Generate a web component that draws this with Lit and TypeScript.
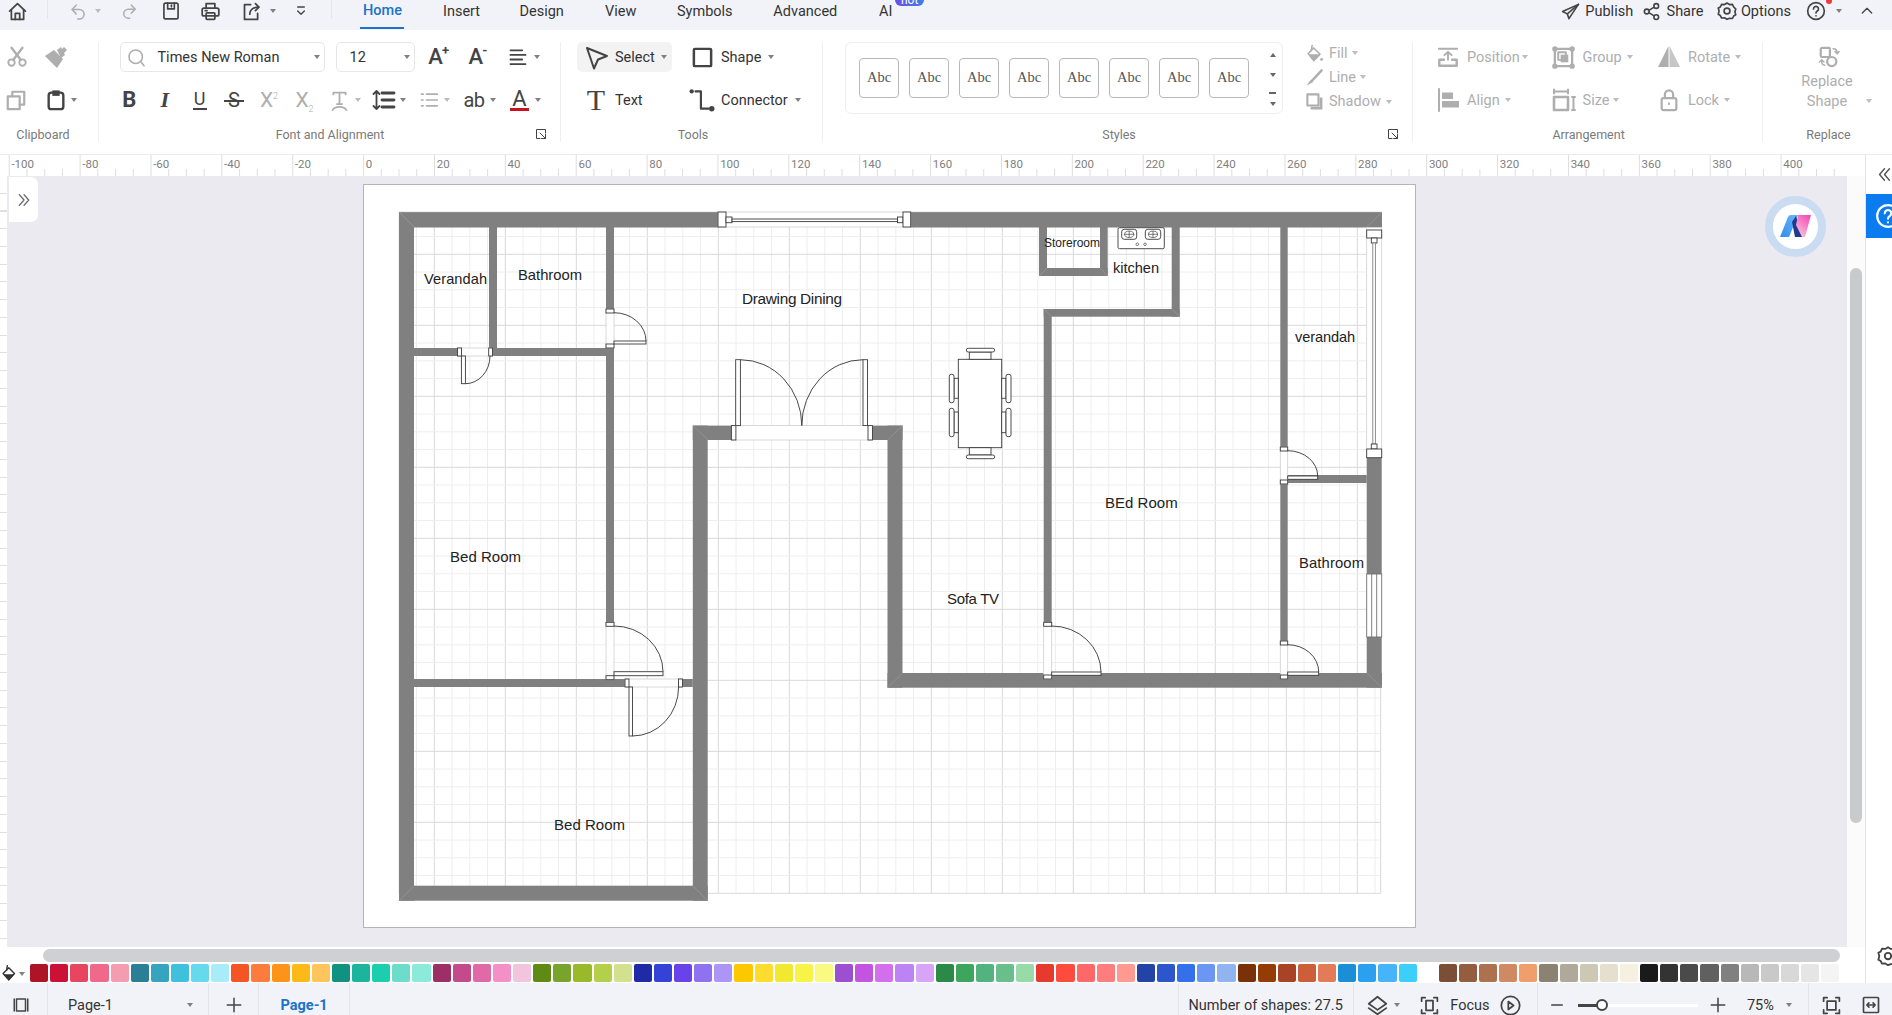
import { LitElement, html, css, svg } from "lit";
import { customElement } from "lit/decorators.js";

type Item = [number, number, unknown, string?];

const place = (items: Item[], origin = 0) => {
  let prev = origin;
  return items.map(([x, w, c, cls]) => {
    const m = x - prev;
    prev = x + w;
    return html`<span class="cell ${cls || ""}" style="margin-left:${m}px;width:${w}px">${c}</span>`;
  });
};
const ic = (s: number, body: unknown, cls = "") =>
  html`<svg class="ic ${cls}" width=${s} height=${s} viewBox="0 0 24 24">${body}</svg>`;
const I = (cx: number, s: number, body: unknown, cls = ""): Item => [cx - s / 2, s, ic(s, body), cls];
const T = (x: number, w: number, t: unknown, cls = ""): Item => [x, w, t, "t " + cls];
const CT = (cx: number, w: number, t: unknown, cls = ""): Item => [cx - w / 2, w, t, cls];
const C = (cx: number, cls = ""): Item => [cx - 4, 8, html`<i class="caret"></i>`, cls];
const SEP = (x: number): Item => [x, 1, "", "sep"];

const P = {
  home: svg`<path d="M3 11.500 12 3l9 8.500"/><path d="M5 10v11h14V10"/><path d="M9.500 21v-7h5v7"/>`,
  undo: svg`<path d="M9 4 4 9.500 9 15"/><path d="M4 9.500h9a6 6 0 0 1 6 6 6 6 0 0 1-6 6h-2"/>`,
  redo: svg`<path d="M15 4l5 5.500-5 5.500"/><path d="M20 9.500h-9a6 6 0 0 0-6 6 6 6 0 0 0 6 6h2"/>`,
  save: svg`<rect x="3.500" y="2.500" width="17" height="19" rx="2"/><path d="M8 2.500v7h8v-7"/><path d="M12.500 5v2"/>`,
  print: svg`<path d="M7 8V3h10v5"/><rect x="2.500" y="8" width="19" height="9" rx="2"/><rect x="7" y="13.500" width="10" height="7.500" rx="1"/><path d="M6 11h2"/>`,
  exp: svg`<path d="M11 4H4v17h15v-7"/><path d="M10 15c0-4.500 3.500-8 10-8"/><path d="M16.500 3 20.500 7l-4 4"/>`,
  cust: svg`<path d="M7 6h10"/><path d="M7 12l5 5 5-5"/>`,
  plane: svg`<path d="M22 3 2 12l6 3 2 6 12-18Z"/><path d="M22 3 8 15"/>`,
  share: svg`<circle cx="6" cy="12" r="3"/><circle cx="18" cy="5" r="3"/><circle cx="18" cy="19" r="3"/><path d="M8.700 10.500 15.300 6.500M8.700 13.500l6.600 4"/>`,
  gear: svg`<path d="M12 2.500l3 1.800 3.500-.3 1.500 3.200 2.500 2.300-1 3.500 1 3.500-2.500 1.500-1.500 3-3.500-.2L12 22l-3-1.800-3.500.2L4 17.500 1.500 16l1-4-1-3.500L4 7.200 5.500 4 9 4.300z"/><circle cx="12" cy="12" r="3.500"/>`,
  help: svg`<circle cx="12" cy="12" r="10"/><path d="M9 9.500a3 3 0 1 1 4.500 2.600c-1 .6-1.500 1.200-1.500 2.400"/><path d="M12 17.800v.2"/>`,
  up: svg`<path d="M5 15l7-7 7 7"/>`,
  cut: svg`<circle cx="6" cy="18" r="3.500"/><circle cx="18" cy="18" r="3.500"/><path d="M8 15 18 2M16 15 6 2" stroke-width="2.600"/>`,
  brush: svg`<path class="f" d="M1 11 10 5l9 9-6 9z"/><path class="f" d="M13 5l4-3 1 2 2-2 3 3-3 3 1 2-4 3z"/>`,
  copy: svg`<rect x="3" y="8" width="13" height="14" stroke-width="2.400"/><path d="M8 8V3h13v14h-5" stroke-width="2.400"/>`,
  paste: svg`<rect x="4" y="4" width="16" height="18" rx="3" stroke-width="2.600"/><path class="f" d="M8 1.500h8v6H8z"/>`,
  search: svg`<circle cx="11" cy="11" r="8.500"/><path d="M17.500 17.500l4 5"/>`,
  align: svg`<path d="M3 4h14M3 9.500h18M3 15h14M3 20.500h18" stroke-width="2.200"/>`,
  spacing: svg`<path d="M10 5h12M10 12h12M10 19h12" stroke-width="2.800"/><path d="M4.500 3v18M1.500 6l3-3 3 3M1.500 18l3 3 3-3" stroke-width="1.800"/>`,
  bullets: svg`<path d="M9 5h13M9 12h13M9 19h13M3 5h2M3 12h2M3 19h2"/>`,
  tstyle: svg`<path d="M5 5V3h14v2M12 3v13M9 16h6" /><path d="M4 23c3-5 13-5 16 0"/>`,
  cursor: svg`<path d="M3 3l20 8-9 3.500-4 9z"/>`,
  shape: svg`<rect x="3" y="3" width="18" height="18" rx="1" stroke-width="2.600"/>`,
  conn: svg`<circle class="f" cx="2.500" cy="4" r="2"/><path d="M6 4h5v16h7"/><circle class="f" cx="21" cy="20" r="2.500"/>`,
  launch: svg`<path d="M21 10V3H3v18h7"/><path d="M10 10l11 11M21 13v8h-8" />`,
  fill: svg`<path d="M4 12 11 5l8 8-8 8z"/><path class="f" d="M4 13h15l-8 8z"/><path d="M8 8 9 2"/><circle class="f" cx="21" cy="19.500" r="1.800"/>`,
  line: svg`<path class="f" d="M2 22 7 15l3 3z"/><path d="M9 16 21 3" stroke-width="3"/>`,
  shadow: svg`<rect x="3" y="3" width="14" height="14" stroke-width="2.600"/><path class="f" d="M18.500 7h3.500v15H7v-3.500h11.500z"/>`,
  pos: svg`<path d="M2 3h20"/><path d="M12 15V7M8 10l4-3.500 4 3.500"/><path d="M7.500 15H2.500v6.500h19V15h-5" stroke-width="2.600"/>`,
  group: svg`<rect x="3" y="3" width="18" height="18" rx="1" stroke-width="2.400"/><rect x="6.500" y="6.500" width="8" height="8"/><path class="f" d="M9 9h8v8H9z"/><circle class="f" cx="3" cy="3" r="2.800"/><circle class="f" cx="21" cy="3" r="2.800"/><circle class="f" cx="3" cy="21" r="2.800"/><circle class="f" cx="21" cy="21" r="2.800"/>`,
  rotate: svg`<path class="f" d="M11.500 1v21H1z"/><path class="f" opacity=".7" d="M12.500 1v21H23z"/>`,
  alignl: svg`<path d="M3 1v22"/><rect class="f" x="6" y="4.500" width="11" height="6.500"/><rect class="f" x="6" y="13" width="17" height="6.500"/>`,
  size: svg`<path d="M2 1.500v4M16 1.500v4M2 3.500h14"/><rect x="2" y="9" width="14" height="13" stroke-width="2.600"/><path d="M20 9h3M20 22h3M21.500 9v13"/>`,
  lock: svg`<rect x="4" y="10" width="16" height="13" rx="2" stroke-width="2.400"/><path d="M7.500 10V6a4.500 4.500 0 0 1 9 0v4" stroke-width="2.400"/><path d="M12 15.500v1"/>`,
  replace: svg`<rect x="3" y="2" width="10" height="10" rx="1.500" stroke-width="2.400"/><circle cx="15" cy="17" r="5" stroke-width="2.400"/><path d="M16.500 3c3 0 4.500 1.500 4.500 5M18.500 6l2.500 2.500L23 6M7.500 21C5 21 4 19.500 4 16M1.500 17.500 4 15l2.500 2.500" stroke-width="1.600"/>`,
  bucket: svg`<path d="M3 12 11 4l8 8-8 9z"/><path class="f" d="M3 13h16l-8 9z"/><path d="M8 7 9 1"/>`,
  panel: svg`<path d="M3 4v16M21 4v16"/><rect x="6" y="4" width="12" height="16"/>`,
  plus: svg`<path d="M12 3v18M3 12h18"/>`,
  minus: svg`<path d="M4 12h16"/>`,
  layers: svg`<path d="M12 2 22 10l-10 7L2 10z"/><path d="M2 15l10 7 10-7"/>`,
  focus: svg`<path d="M3 7V3h4M17 3h4v4M3 17v4h4M17 21h4v-4"/><rect x="8" y="6.500" width="8" height="11"/>`,
  play: svg`<circle cx="12" cy="12" r="10.500"/><path d="M9.500 7.500v9l6-4.500z"/>`,
  fit: svg`<path d="M3 7V3h4M17 3h4v4M3 17v4h4M17 21h4v-4"/><rect x="7" y="7" width="10" height="10"/>`,
  width: svg`<rect x="3" y="3" width="18" height="18" rx="1"/><path d="M7 12h10M9.500 9.500 7 12l2.500 2.500M14.500 9.500 17 12l-2.500 2.500"/>`,
  dbl: svg`<path d="M5 4l7 8-7 8M12 4l7 8-7 8"/>`,
  dbll: svg`<path d="M12 4l-7 8 7 8M19 4l-7 8 7 8"/>`,
};

const SWATCH =
  "#ae1428 #cc1137 #e84560 #f0688a #f49cb0 #2a7f96 #36a3bf #3fc0dc #66d9ec #a8ecfa #f55525 #fb7c3c #fd9419 #fdb917 #fdc55c #119180 #1ab59c #1ccdae #6edccb #8ceadb #9b2f66 #c44b8b #e169a8 #f58fc8 #f2c4de #5f8a14 #78a32c #9ab92a #b4cf4a #d3e08e #1f2aa8 #3442d8 #6a42ea #8f72f0 #ad95f5 #fcc800 #fddc2e #f2e830 #f8f347 #fafa82 #9c4fd1 #c354e2 #d46eec #bd83f4 #d8a4f8 #2b8a47 #3ca65c #52b381 #68bf8b #98dba9 #e63a2e #fd4b3d #fe6868 #fe7e7e #fe9a90 #2343a6 #2d56cd #3470ec #6b96f4 #8fb4f0 #7b3108 #953c05 #a94325 #cc5f3a #e47b58 #1a8fd8 #2ba0ee #47b4fa #3ccffa #ffffff #7a4f35 #945d40 #ae7150 #d08a63 #f19e6d #8c8272 #b0a898 #ccc8b4 #e5dfd0 #f5f0e0 #1a1a1a #333333 #4a4a4a #606060 #808080 #b8b8b8 #c9c9c9 #d8d8d8 #e5e5e5 #f4f4f4".split(" ");

const WALLS = [
  [399, 212, 718, 227.5], [910.7, 212, 1382, 227.5], [399, 212, 414, 900.7], [399, 885.7, 707.7, 900.7],
  [692.8, 425.6, 707.7, 900.7], [692.8, 425.6, 731.4, 440], [872.5, 425.6, 902.5, 440], [887.5, 425.6, 902.5, 687.7],
  [887.5, 673, 1382, 687.7], [489, 227, 497, 348], [414, 348, 457.5, 356], [492.5, 348, 614, 356],
  [606, 227, 614, 309], [606, 348, 614, 622.3], [414, 679, 625, 687], [682.5, 679, 692.8, 687],
  [1039, 227, 1047, 276], [1100, 227, 1107.7, 276], [1039, 268, 1107.7, 276], [1171.7, 227, 1179.7, 316.7],
  [1043.7, 309, 1179.7, 316.7], [1043.7, 309, 1051.7, 622.3], [1280.3, 227, 1287.7, 447], [1280.3, 484, 1287.7, 641],
  [1287.7, 475, 1366.7, 483], [1366.7, 457.7, 1381.7, 574], [1366.7, 637, 1381.7, 687.7],
];
const MITRES = [
  [399, 212, 414, 227], [1382, 212, 1367, 227], [399, 900.7, 414, 885.7], [707.7, 900.7, 692.8, 885.7],
  [693, 425.6, 708, 440], [902.5, 425.6, 887.5, 440], [1382, 687.7, 1367, 673], [887.5, 687.7, 902.5, 673],
  [1039, 276, 1047, 268], [1107.7, 276, 1100, 268], [1179.7, 316.7, 1171.7, 309], [1043.7, 309, 1051.7, 316.7],
];
const LABELS: [string, number, number, number, number][] = [
  ["Verandah", 424, 278.7, 63, 14.6], ["Bathroom", 518, 275, 64, 14.8], ["Drawing Dining", 742, 299, 100, 15.4],
  ["Bed Room", 450, 556.7, 71, 15], ["Storeroom", 1044, 243, 56, 12], ["kitchen", 1113, 267.7, 46, 14.6],
  ["verandah", 1295, 336.7, 60, 14.6], ["BEd Room", 1105, 502.7, 72.7, 15], ["Bathroom", 1299, 562.7, 65, 14.8],
  ["Sofa TV", 947, 598.7, 52, 15], ["Bed Room", 554, 825, 71, 15],
];

const vdoor = (jx: number, jw: number, y1: number, y2: number, lx2: number, ly1: number, ly2: number) => svg`
  <rect class="gap" x=${jx} y=${y1} width=${jw} height=${y2 - y1}/>
  <rect class="cap" x=${jx} y=${y1} width=${jw} height="4"/>
  <rect class="cap" x=${jx} y=${y2 - 4} width=${jw} height="4"/>
  <rect class="cap" x=${jx + jw} y=${ly1} width=${lx2 - jx - jw} height=${ly2 - ly1}/>
  <path class="arc" d="M${jx + jw} ${y1 + 3.7}A${lx2 - jx - jw} ${ly1 - y1 - 3.7} 0 0 1 ${lx2} ${ly1}"/>`;

const chair = (x: number, y: number, w: number, h: number, bx: number, by: number, bw: number, bh: number) => svg`
  <rect class="cap" x=${x} y=${y} width=${w} height=${h}/>
  <rect class="cap" x=${bx} y=${by} width=${bw} height=${bh} rx="2"/>`;

const gridLines = () => {
  const out: unknown[] = [];
  for (let i = 0; i <= 55; i++) {
    const x = 398.8 + 17.75 * i;
    out.push(svg`<line class=${(i - 2) % 4 === 0 ? "maj" : "min"} x1=${x} x2=${x} y1="212" y2="893.3"/>`);
  }
  for (let i = 0; i <= 38; i++) {
    const y = 218.8 + 17.75 * i;
    out.push(svg`<line class=${(i - 2) % 4 === 0 ? "maj" : "min"} x1="399" x2="1381" y1=${y} y2=${y}/>`);
  }
  out.push(svg`<line class="maj" x1="1380.7" x2="1380.7" y1="212" y2="893.3"/>`);
  return out;
};

const plan = () => svg`
  ${gridLines()}
  ${WALLS.map(([a, b, c, d]) => svg`<rect class="wall" x=${a} y=${b} width=${c - a} height=${d - b}/>`)}
  <line class="edge" x1="399" y1="212.3" x2="718" y2="212.3"/>
  <line class="edge" x1="911" y1="212.3" x2="1382" y2="212.3"/>
  ${MITRES.map(([a, b, c, d]) => svg`<line class="edge" x1=${a} y1=${b} x2=${c} y2=${d}/>`)}

  <rect class="gap" x="718" y="212" width="192.700" height="15"/>
  <rect class="cap" x="718" y="212" width="8" height="15"/><rect class="cap" x="726" y="217" width="6" height="5.700"/>
  <rect class="cap" x="732" y="219" width="165.500" height="2.600"/>
  <rect class="cap" x="897.500" y="217" width="5.500" height="5.700"/><rect class="cap" x="903" y="212" width="7.700" height="15"/>

  <rect class="gap" x="1366.700" y="227.500" width="15" height="230"/>
  <rect class="cap" x="1366.700" y="230" width="15" height="8"/><rect class="cap" x="1371.300" y="238" width="5.700" height="5"/>
  <rect class="cap grey" x="1372.800" y="243" width="2.600" height="201"/>
  <rect class="cap" x="1371.300" y="444" width="5.700" height="5"/><rect class="cap" x="1366.700" y="449" width="15" height="8.700"/>

  <rect class="vent" x="1366.700" y="574" width="15" height="63"/>
  <path class="vent" d="M1371.700 574v63M1376.700 574v63"/>

  <rect class="gap" x="731.400" y="425.600" width="141.100" height="14.400"/>
  <rect class="cap" x="731.400" y="425.600" width="4.500" height="14.400"/>
  <rect class="cap" x="868" y="425.600" width="4.500" height="14.400"/>
  <rect class="cap" x="735.700" y="359.700" width="4.700" height="65.900"/>
  <rect class="cap" x="863" y="359.700" width="4.500" height="65.900"/>
  <path class="arc" d="M740.400 359.700A61.400 65.900 0 0 1 801.800 425.600A61.200 65.900 0 0 1 863 359.700"/>

  ${vdoor(606, 8, 309, 348, 646, 341, 344)}
  ${vdoor(606, 8, 622.3, 679.7, 663, 671.7, 675.7)}
  ${vdoor(1043.7, 8, 622.3, 679, 1101, 672, 675.3)}
  ${vdoor(1280.3, 7.4, 447, 484, 1317.7, 476, 479.3)}
  ${vdoor(1280.3, 7.4, 641, 679, 1318.7, 672, 675.3)}

  <rect class="gap" x="457.500" y="348" width="35" height="8"/>
  <rect class="cap" x="457.500" y="348" width="4" height="8"/><rect class="cap" x="488.700" y="348" width="3.800" height="8"/>
  <rect class="cap" x="461.400" y="356" width="4" height="27.700"/>
  <path class="arc" d="M490 356A24.600 27.700 0 0 1 465.400 383.700"/>

  <rect class="gap" x="625" y="679" width="57.500" height="8"/>
  <rect class="cap" x="625" y="679" width="4" height="8"/><rect class="cap" x="678.500" y="679" width="4" height="8"/>
  <rect class="cap" x="629" y="687" width="3.500" height="49"/>
  <path class="arc" d="M678.600 687A46.100 49 0 0 1 632.500 736"/>

  <rect class="cap" x="958.300" y="359.300" width="43.400" height="88.400"/>
  ${chair(969.3, 352, 21.7, 7.3, 966.3, 348.3, 28.4, 3.7)}
  ${chair(969.3, 447.7, 21.7, 7.3, 966.3, 455, 28.4, 3.7)}
  ${chair(954, 378.3, 4.3, 20, 949.3, 374.3, 4.7, 28.4)}
  ${chair(954, 412, 4.3, 20.7, 949.3, 408.3, 4.7, 28.4)}
  ${chair(1001.7, 378.3, 4.3, 20, 1006, 374.3, 5, 28.4)}
  ${chair(1001.7, 412, 4.3, 20.7, 1006, 408.3, 5, 28.4)}

  <rect class="cap" x="1118" y="227.700" width="46.300" height="21" rx="1.500"/>
  <rect class="cap" x="1121.700" y="229.300" width="15" height="10" rx="2.500"/>
  <rect class="cap" x="1145.300" y="229.300" width="15.400" height="10" rx="2.500"/>
  <ellipse class="thin" cx="1129.200" cy="234.300" rx="4.500" ry="3.200"/>
  <ellipse class="thin" cx="1153" cy="234.300" rx="4.500" ry="3.200"/>
  <path class="thin" d="M1124 234.300h10.400M1129.200 231v6.600M1148 234.300h10M1153 231v6.600"/>
  <circle class="thin" cx="1137.300" cy="244.300" r="1.300"/>
  <circle class="thin" cx="1145" cy="244.300" r="1.300"/>

  ${LABELS.map(([t, x, y, w, s]) => svg`<text class="lbl" x=${x} y=${y + s * 0.35} font-size=${s} textLength=${w}>${t}</text>`)}
`;

const rulerTicks = () => {
  const out: unknown[] = [];
  for (let v = -100; v <= 420; v += 5) {
    const x = 363.6 + 3.5437 * v;
    if (x > 1846) break;
    if (v % 20 === 0) {
      out.push(svg`<line class="rt" x1=${x} x2=${x} y1="0" y2="22"/><text class="rl" x=${x + 2.2} y="13">${v}</text>`);
    } else {
      out.push(svg`<line class="rt" x1=${x} x2=${x} y1="14" y2="22"/>`);
    }
  }
  return out;
};

@customElement("app-root")
export class AppRoot extends LitElement {
  static styles = css`
    :host { display: block; width: 1892px; height: 1015px; overflow: hidden; font-family: Roboto, "Noto Sans", sans-serif; font-size: 14.5px; color: #333; background: #fff; }
    * { box-sizing: border-box; }
    .ic { fill: none; stroke: currentColor; stroke-width: 2; stroke-linecap: round; stroke-linejoin: round; display: block; overflow: visible; }
    .ic .f { fill: currentColor; stroke: none; }
    .cell { display: flex; align-items: center; justify-content: center; flex: none; white-space: nowrap; height: 100%; position: relative; }
    .cell.t { justify-content: flex-start; }
    .caret { display: block; width: 0; height: 0; border-left: 3.5px solid transparent; border-right: 3.5px solid transparent; border-top: 4.5px solid #808080; }
    .off { color: #aeaeae; }
    .off .caret { border-top-color: #bcbcbc; }
    .dk { color: #444; }

    .top { display: flex; height: 30px; background: #f2f3f8; align-items: flex-start; }
    .top .cell { height: 22px; }
    .top .sep { background: #e6e7ec; height: 19px; margin-top: 0; }
    .top .cell.tab-on { height: 29px; padding-bottom: 7px; color: #1a74c9; font-weight: 500; border-bottom: 2.5px solid #1a74c9; justify-content: center; }
    .top .cell.hot { height: 6px; overflow: hidden; background: linear-gradient(90deg, #6a4fe6, #3f7fe8); border-radius: 0 0 7px 7px; color: #fff; font-size: 12px; line-height: 1; align-items: flex-end; }
    .dot { position: absolute; right: -6px; top: -2px; width: 6px; height: 6px; border-radius: 50%; background: #ee3a3a; }

    .ribbon { display: flex; height: 124px; background: #fff; padding-top: 12px; }
    .grp { flex: none; height: 100px; border-right: 1px solid #efefef; display: flex; flex-direction: column; }
    .row { display: flex; height: 30px; flex: none; }
    .row + .row { margin-top: 13px; }
    .lab { display: flex; height: 20px; margin-top: 9px; font-size: 12.5px; color: #7a7a7a; flex: none; }
    .w99 { width: 99px; } .w462 { width: 462px; } .w262 { width: 262px; } .w590 { width: 590px; } .w350 { width: 350px; } .w129 { width: 129px; border-right: 0; }
    .box { display: flex; border: 1px solid #e6e6e6; border-radius: 5px; height: 30px; }
    .fontbox { width: 205.300px; }
    .sizebox { width: 79.400px; }
    .sel { display: flex; background: #f3f3f3; border-radius: 5px; height: 30px; width: 95px; }
    .g { font-size: 21px; color: #444; line-height: 1; }
    .g.b { font-weight: 700; font-size: 22px; }
    .g.it { font-family: "Liberation Serif", serif; font-weight: 700; font-style: italic; font-size: 22px; }
    .g.u { font-size: 18px; border-bottom: 2px solid #444; padding: 0 1px 1px; line-height: 16px; }
    .g.s { font-size: 20px; position: relative; padding: 0 3px; }
    .g.s::after { content: ""; position: absolute; left: -1px; right: -1px; top: 50%; height: 1.500px; background: #444; }
    .g.x { color: #aeaeae; font-size: 21px; }
    .g sub, .g sup { font-size: 9px; line-height: 0; font-weight: 300; }
    .g.ab { font-size: 20px; letter-spacing: -0.5px; }
    .g.aa { font-size: 22px; font-weight: 500; display: flex; }
    .g.aa small { font-size: 13px; font-weight: 700; margin-top: -2px; margin-left: -1px; line-height: 1; }
    .ared { border-bottom: 3px solid #c8141e; padding: 0 2px 0; line-height: 19px; font-size: 22px; color: #444; }
    .tser { font-family: "Liberation Serif", serif; font-size: 30px; color: #444; line-height: 1; }

    .stylebody { display: flex; height: 73px; flex: none; }
    .gallery { width: 438.5px; height: 71.7px; margin-left: 21.500px; border: 1px solid #eeeeee; border-radius: 6px; display: flex; align-items: center; padding-left: 13.500px; flex: none; position: relative; }
    .card { width: 40px; height: 40px; border: 1px solid #b8b8b8; border-radius: 4px; margin-right: 10px; font-family: "Liberation Serif", serif; font-size: 14.5px; color: #555; display: flex; align-items: center; justify-content: center; flex: none; }
    .scroll { position: absolute; right: 6px; top: 10px; bottom: 7px; display: flex; flex-direction: column; justify-content: space-between; align-items: center; font-size: 0; }
    .scroll i { display: block; width: 0; height: 0; border-left: 3.5px solid transparent; border-right: 3.5px solid transparent; }
    .scroll .u { border-bottom: 4.500px solid #666; }
    .scroll .d { border-top: 4.500px solid #666; }
    .scroll .m { width: 7px; height: 1.500px; background: #666; margin-bottom: -8px; border: 0; }
    .fills { display: flex; flex-direction: column; flex: none; margin-top: -1px; }
    .fills .row { height: 24.300px; }
    .fills .row + .row { margin-top: 0; }
    .rep { display: flex; height: 24px; flex: none; }
    .rep1 { margin-top: -3px; }
    .rep2 { margin-top: -4px; }
    .lab.rp { margin-top: 11px; }

    .work { display: flex; height: 829px; }
    .lcol { width: 1865px; flex: none; display: flex; flex-direction: column; }
    .rpanel { flex: 1; border-left: 1px solid #e3e3e8; border-top: 1px solid #ececec; display: flex; flex-direction: column; position: relative; overflow: hidden; }
    .dbl { height: 39px; flex: none; display: flex; align-items: center; padding-left: 10px; color: #555; }
    .bluebox { height: 44px; width: 40px; background: #0a7cf0; flex: none; color: #fff; display: flex; align-items: center; padding-left: 9px; }
    .gearbox { margin-top: auto; height: 38px; flex: none; padding: 0 0 0 11px; color: #444; }
    .ruler { height: 22px; flex: none; display: block; }
    .ruler-wrap { height: 22px; flex: none; border-top: 1px solid #ebebeb; overflow: hidden; background: #fff; }
    .rt { stroke: #dedede; stroke-width: 1; }
    .rl { fill: #808080; font-size: 11.5px; font-family: Roboto, sans-serif; }
    .mid-row { display: flex; height: 771px; flex: none; }
    .lstrip { width: 7px; flex: none; background: repeating-linear-gradient(180deg, #fff 0, #fff 16.7px, #e0e0e0 16.7px, #e0e0e0 17.75px); }
    .canvas { width: 1840px; flex: none; background: #eaeaf0; position: relative; overflow: hidden; }
    .page { margin: 8px 0 0 356px; width: 1053px; height: 744px; background: #fff; border: 1px solid #b5b5b5; }
    .page svg { display: block; width: 1051px; height: 742px; }
    .toggle { position: absolute; left: 2px; top: 1px; width: 29px; height: 45px; background: #fff; border-radius: 0 7px 7px 0; display: flex; align-items: center; justify-content: center; color: #666; }
    .ai { position: absolute; left: 1758px; top: 20px; width: 61px; height: 61px; border-radius: 50%; background: #fff; border: 8px solid #c9dcf2; display: flex; align-items: center; justify-content: center; }
    .vtrack { width: 18px; flex: none; background: #fbfbfc; padding: 92px 0 0 3px; }
    .vthumb { width: 12px; height: 555px; border-radius: 6px; background: #c9cacc; }
    .hscroll { height: 17px; flex: none; padding: 2px 0 0 43px; background: #fff; }
    .hthumb { width: 1797px; height: 13px; border-radius: 7px; background: #cfd0d2; }
    .colors { height: 19px; flex: none; display: flex; background: #fff; position: relative; overflow: hidden; }
    .sw { width: 18.2px; height: 18px; border-radius: 2px; margin-right: 1.95px; flex: none; }
    .fillic { width: 30px; flex: none; display: flex; align-items: center; color: #333; gap: 1px; padding-left: 1px; }

    .status { display: flex; height: 32px; background: #f2f3f8; align-items: flex-end; }
    .status .cell { height: 20px; font-size: 14.5px; }
    .status .cell.sep { height: 32px; background: #e4e5ea; }
    .status .pg { color: #1a74c9; font-weight: 700; }
    .slide { display: flex; align-items: center; height: 100%; position: relative; }
    .slide b { display: block; height: 3px; flex: none; }
    .slide .dk2 { width: 24px; background: #444; }
    .slide .lt { width: 96px; background: #fff; }
    .knob { width: 12px; height: 12px; flex: none; margin: 0 -6px; border: 2px solid #444; border-radius: 50%; background: #fff; z-index: 1; }

    .wall { fill: #808080; }
    .edge { stroke: #9a9a9a; stroke-width: .7; }
    .maj { stroke: #d9d9d9; stroke-width: 1; }
    .min { stroke: #eeeeee; stroke-width: 1; }
    .gap { fill: #fff; stroke: #cfcfcf; stroke-width: .8; }
    .cap { fill: #fff; stroke: #3a3a3a; stroke-width: .9; }
    .cap.grey { stroke: #808080; }
    .vent { fill: #fff; stroke: #707070; stroke-width: .9; }
    .arc { fill: none; stroke: #333; stroke-width: .9; }
    .thin { fill: none; stroke: #444; stroke-width: .7; }
    .lbl { font-family: "Liberation Sans", Arial, sans-serif; fill: #222; }
  `;

  render() {
    return html`
      ${this.topBar()}
      ${this.ribbon()}
      <div class="work">
        <div class="lcol">
          <div class="ruler-wrap"><svg class="ruler" width="1847" height="22" viewBox="0 0 1847 22">${rulerTicks()}</svg></div>
          <div class="mid-row">
            <div class="lstrip"></div>
            <div class="canvas">
              <div class="page"><svg viewBox="364 185 1051 742">${plan()}</svg></div>
              <div class="toggle">${ic(16, P.dbl)}</div>
              <div class="ai">
                <svg width="31" height="23" viewBox="0 0 31 23">
                  <defs>
                    <linearGradient id="mb" x1="0" y1="1" x2="1" y2="0"><stop offset="0" stop-color="#2f8fee"/><stop offset="1" stop-color="#6db4f7"/></linearGradient>
                    <linearGradient id="mp" x1="0.2" y1="1" x2="0.8" y2="0"><stop offset="0" stop-color="#f8c8dc"/><stop offset=".6" stop-color="#f77bc4"/><stop offset="1" stop-color="#ee4fb8"/></linearGradient>
                  </defs>
                  <path d="M0 22 8 2Q9 0 11 0h7L9 22z" fill="url(#mb)"/>
                  <path d="M12 7 16 1l4 13 4 8h-9z" fill="#203a8f"/>
                  <path d="M18 0h13l-6 22h-3l-6-12z" fill="url(#mp)"/>
                </svg>
              </div>
            </div>
            <div class="vtrack"><div class="vthumb"></div></div>
          </div>
          <div class="hscroll"><div class="hthumb"></div></div>
          <div class="colors">
            <div class="fillic">${ic(17, P.bucket)}<i class="caret"></i></div>
            ${SWATCH.map((c) => html`<div class="sw" style="background:${c}"></div>`)}
          </div>
        </div>
        <div class="rpanel">
          <div class="dbl">${ic(17, P.dbll)}</div>
          <div class="bluebox">${ic(26, P.help)}</div>
          <div class="gearbox">${ic(22, P.gear)}</div>
        </div>
      </div>
      ${this.statusBar()}
    `;
  }

  topBar() {
    return html`<div class="top">
      ${place([
        I(17, 21, P.home, "dk"),
        SEP(47),
        I(78.7, 19, P.undo, "off"),
        C(98.4, "off"),
        I(129, 18, P.redo, "off"),
        I(170.7, 20, P.save, "dk"),
        I(211, 21, P.print, "dk"),
        I(252, 21, P.exp, "dk"),
        C(273),
        I(301, 16, P.cust, "dk"),
        SEP(331.5),
        CT(382.5, 44, "Home", "tab-on"),
        T(443, 40, "Insert"),
        T(519.5, 50, "Design"),
        T(605, 40, "View"),
        T(677, 60, "Symbols"),
        T(773.4, 68, "Advanced"),
        T(879, 14, "AI"),
        [895, 29.5, html`<span>hot</span>`, "hot"],
        I(1570.6, 19, P.plane, "dk"),
        T(1585.4, 50, "Publish"),
        I(1651.7, 19, P.share, "dk"),
        T(1666.6, 40, "Share"),
        I(1726.8, 20, P.gear, "dk"),
        T(1741, 56, "Options"),
        [1806.4, 20, html`${ic(20, P.help)}<span class="dot"></span>`, "dk"],
        C(1839),
        I(1866.7, 16, P.up, "dk"),
      ])}
    </div>`;
  }

  ribbon() {
    return html`<div class="ribbon">
      <div class="grp w99">
        <div class="row">${place([I(17, 22, P.cut, "off"), I(56, 24, P.brush, "off")])}</div>
        <div class="row">${place([I(16, 22, P.copy, "off"), I(56, 22, P.paste, "dk"), C(74)])}</div>
        <div class="lab">${place([CT(43, 70, "Clipboard")])}</div>
      </div>
      <div class="grp w462">
        <div class="row">${place(
          [
            [119.7, 205.3, html`<span class="box fontbox">${place(
              [I(136.6, 19, P.search, "off"), T(157.5, 135, "Times New Roman"), C(316.6)],
              120.7
            )}</span>`],
            [336, 79.4, html`<span class="box sizebox">${place([T(349.5, 30, "12"), C(406.6)], 337)}</span>`],
            CT(438.7, 28, html`<span class="g aa">A<small>+</small></span>`),
            CT(478, 28, html`<span class="g aa">A<small>-</small></span>`),
            I(518, 20, P.align, "dk"),
            C(536.8),
          ],
          99
        )}</div>
        <div class="row">${place(
          [
            CT(129.4, 24, html`<span class="g b">B</span>`),
            CT(164.7, 24, html`<span class="g it">I</span>`),
            CT(199.7, 24, html`<span class="g u">U</span>`),
            CT(234, 24, html`<span class="g s">S</span>`),
            CT(269, 30, html`<span class="g x">X<sup>2</sup></span>`),
            CT(304.5, 30, html`<span class="g x">X<sub>2</sub></span>`),
            I(339.5, 21, P.tstyle, "off"),
            C(357.6, "off"),
            I(383.7, 24, P.spacing, "dk"),
            C(402.6),
            I(428.7, 20, P.bullets, "off"),
            C(447, "off"),
            CT(474, 28, html`<span class="g ab">ab</span>`),
            C(492.6),
            CT(519.5, 24, html`<span class="ared">A</span>`),
            C(537.6),
          ],
          99
        )}</div>
        <div class="lab">${place([CT(330, 130, "Font and Alignment"), I(541, 12, P.launch, "dk")], 99)}</div>
      </div>
      <div class="grp w262">
        <div class="row">${place(
          [
            [577, 95, html`<span class="sel">${place(
              [I(596, 24, P.cursor, "dk"), T(615, 44, "Select"), C(664)],
              577
            )}</span>`],
            I(702, 23, P.shape, "dk"),
            T(721, 44, "Shape"),
            C(771),
          ],
          561
        )}</div>
        <div class="row">${place(
          [
            CT(596, 26, html`<span class="tser">T</span>`),
            T(615, 32, "Text"),
            I(702, 26, P.conn, "dk"),
            T(721, 70, "Connector"),
            C(798),
          ],
          561
        )}</div>
        <div class="lab">${place([CT(693, 50, "Tools")], 561)}</div>
      </div>
      <div class="grp w590">
        <div class="stylebody">
          <div class="gallery">
            ${[1, 2, 3, 4, 5, 6, 7, 8].map(() => html`<div class="card">Abc</div>`)}
            <div class="scroll"><i class="u"></i><i class="d"></i><i class="m"></i><i class="d"></i></div>
          </div>
          <div class="fills off">
            <div class="row">${place([I(1314, 19, P.fill), T(1329, 22, "Fill"), C(1355)], 1283)}</div>
            <div class="row">${place([I(1314, 19, P.line), T(1329, 30, "Line"), C(1363)], 1283)}</div>
            <div class="row">${place([I(1314, 19, P.shadow), T(1329, 54, "Shadow"), C(1389)], 1283)}</div>
          </div>
        </div>
        <div class="lab">${place([CT(1119, 50, "Styles"), I(1392.6, 12, P.launch, "dk")], 823)}</div>
      </div>
      <div class="grp w350">
        <div class="row off">${place(
          [I(1448, 22, P.pos), T(1467, 52, "Position"), C(1525), I(1563.7, 23, P.group), T(1582.6, 42, "Group"), C(1630), I(1668.6, 24, P.rotate), T(1688, 44, "Rotate"), C(1738)],
          1413
        )}</div>
        <div class="row off">${place(
          [I(1448, 24, P.alignl), T(1467, 36, "Align"), C(1508), I(1563.7, 24, P.size), T(1582.6, 28, "Size"), C(1616), I(1668.6, 22, P.lock), T(1688, 32, "Lock"), C(1727)],
          1413
        )}</div>
        <div class="lab">${place([CT(1588.6, 90, "Arrangement")], 1413)}</div>
      </div>
      <div class="grp w129">
        <div class="row off">${place([I(1828.5, 22, P.replace)], 1763)}</div>
        <div class="rep rep1 off">${place([CT(1827, 60, "Replace")], 1763)}</div>
        <div class="rep rep2 off">${place([CT(1827, 50, "Shape"), C(1869)], 1763)}</div>
        <div class="lab rp">${place([CT(1828.5, 60, "Replace")], 1763)}</div>
      </div>
    </div>`;
  }

  statusBar() {
    return html`<div class="status">
      ${place([
        I(21, 18, P.panel, "dk"),
        SEP(47),
        T(68, 60, "Page-1"),
        C(190),
        SEP(207.5),
        I(233.5, 18, P.plus, "dk"),
        SEP(258),
        T(280.5, 50, "Page-1", "pg"),
        SEP(348.7),
        SEP(1178),
        T(1188.5, 158, "Number of shapes: 27.5"),
        SEP(1352.6),
        I(1377.4, 21, P.layers, "dk"),
        C(1397),
        I(1430, 21, P.focus, "dk"),
        T(1450.4, 40, "Focus"),
        I(1511, 21, P.play, "dk"),
        SEP(1537),
        I(1556.6, 16, P.minus, "dk"),
        [1578, 120, html`<span class="slide"><b class="dk2"></b><span class="knob"></span><b class="lt"></b></span>`, "t"],
        I(1718, 18, P.plus, "dk"),
        T(1747, 32, "75%"),
        C(1789),
        SEP(1808),
        I(1831.7, 21, P.fit, "dk"),
        I(1871.5, 20, P.width, "dk"),
      ])}
    </div>`;
  }
}
